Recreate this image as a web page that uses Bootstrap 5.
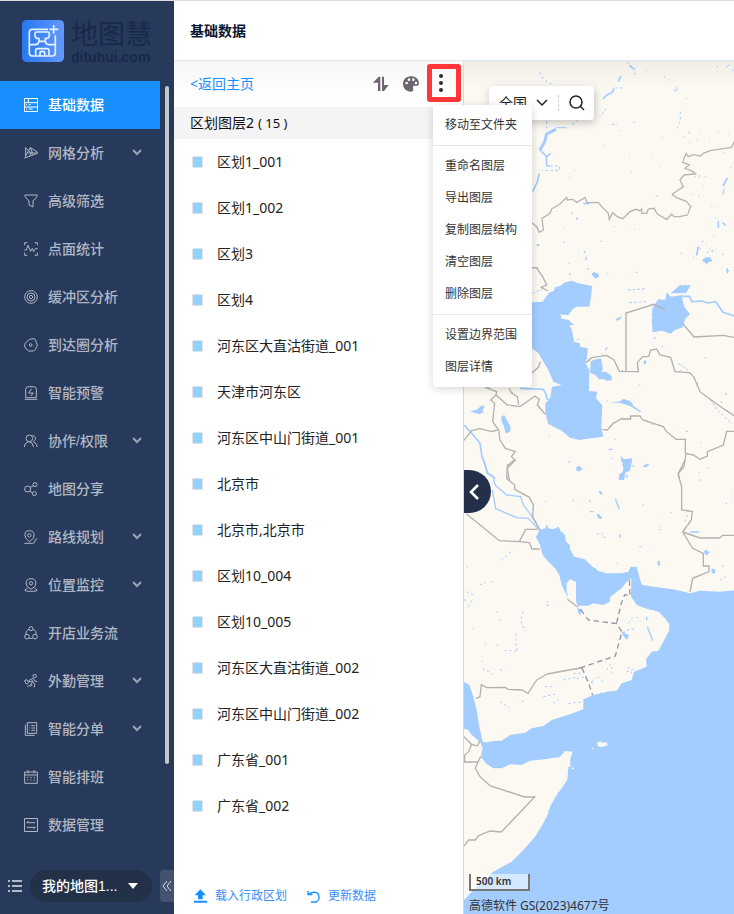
<!DOCTYPE html>
<html lang="zh-CN">
<head>
<meta charset="utf-8">
<meta name="viewport" content="width=device-width, initial-scale=1">
<title>基础数据</title>
<link href="https://cdn.jsdelivr.net/npm/bootstrap@5.3.0/dist/css/bootstrap.min.css" rel="stylesheet">
<style>
  body{font-family:"Noto Sans","Noto Sans CJK SC",sans-serif;font-size:14px;line-height:20px;color:#222}
  .app-shell{border-top:1px solid #dedede}
  .side-pane{width:174px;background:#283a5b;color:#b1b7c2;font-family:"Liberation Sans","Noto Sans CJK SC",sans-serif}
  .brand{height:80px;padding:19px 0 0 22px;gap:7px;color:#17284b;text-decoration:none}
  .brand-cn{font-size:27px;line-height:30px}
  .brand-en{font-size:14px;line-height:14px;font-weight:700}
  .side-menu{width:160px}
  .side-menu .nav-link{height:48px;padding:0 18px 0 24px;gap:10px;color:inherit;font-weight:500;border-radius:0}
  .side-menu .nav-link.active{background:#188fff;color:#fff}
  .ico{width:14px;height:14px;flex:none;fill:none;stroke:currentColor;stroke-width:3}
  .chev{width:10px;height:8px;flex:none;fill:none;stroke:#98a3b5;stroke-width:2}
  .side-thumb{right:5px;top:85px;width:4px;height:678px;background:#c5c7cb;border-radius:2px}
  .side-foot{height:32px;margin-bottom:12px}
  .plain-btn{padding:0;border:0;background:none;color:inherit;line-height:0}
  .map-pick{width:122px;height:32px;padding:0 14px 0 12px;border:0;border-radius:16px;background:#223048;color:#fff;font-weight:500}
  .fold-btn{width:14px;height:32px;padding:0;border:0;border-radius:4px 0 0 4px;background:#43526f;color:#dce0e7;line-height:0}
  .page-head{height:60px;padding:0 16px;border-bottom:1px solid #dde8f3}
  .page-head h1{font-size:14px;line-height:20px;font-weight:700;color:#0a1530}
  .layer-pane{width:290px;border-right:1px solid #d8dadd;background:linear-gradient(#f7f7f8,#fff 40px)}
  .tool-row{height:46px;padding:0 2px 0 16px;gap:14px;color:#6d6671}
  .tool-row>a{color:#188fff;text-decoration:none}
  .more-wrap{margin-left:-6px}
  .more-btn{width:34px;height:38px;margin-top:-3px;padding:0 0 0 7px;border:5px solid #ff3738;border-radius:3px;background:transparent;line-height:0}
  .group-row{height:32px;padding:0 16px;background:#f4f4f4;color:#111}
  .group-row small{font-size:13px}
  .layer-row{height:46px;padding:0 18px;gap:14px}
  .swatch{width:11px;height:12px;border:1px solid #e4e3e3;border-radius:1px;background:#91d3ff}
  .pane-foot{padding:0 20px;margin-bottom:8px;gap:20px;font-size:12px}
  .pane-foot button{color:#3b8ff5;line-height:20px}
  .more-wrap .dropdown-menu{left:6px;top:38px;min-width:0;width:99px;padding:4px 0;margin:0;border:0;border-radius:4px;font-size:12px;box-shadow:0 2px 8px #0000002b;z-index:30}
  .dropdown-menu .dropdown-item{height:32px;padding:0 12px;line-height:32px;color:#333}
  .dropdown-menu .dropdown-divider{margin:4px 0;border-color:#e6e6e6;opacity:1}
  .map-pane{background:#fcf9f2}
  .map-pane .top-shade{height:28px;background:linear-gradient(#0000000c,#0000);inset:0 0 auto}
  .map-find{left:25px;top:25px;height:34px;padding:0 9px 0 10px;gap:10px;background:#fff;border-radius:3px;box-shadow:1px 3px 8px #00000038}
  .map-find select{appearance:none;border:0;padding:0;background:none;width:28px;color:#222;line-height:20px}
  .find-chev{margin-left:-1px}
  .find-rule{height:16px;border-left:1px dashed #ccc}
  .pane-toggle{left:0;top:409px;width:27px;height:43px;border:0;padding:0 0 0 4px;border-radius:0 22px 22px 0;background:#24304a;line-height:0}
  .map-notes{left:5px;bottom:0;color:#333;font-size:12px}
  .scale-bar{width:61px;height:17px;padding-left:5px;border:2px solid #777;border-top:0;background:#ffffff88;font-size:10px;line-height:14px;font-weight:600}
  .map-notes p{margin:6px 0 0;line-height:17px}
</style>
<script src="https://cdn.jsdelivr.net/npm/bootstrap@5.3.0/dist/js/bootstrap.bundle.min.js"></script>
</head>
<body>
<svg class="d-none"><symbol id="down" viewBox="0 0 10 8"><path d="M1 1l4 4 4-4"/></symbol></svg>
<div class="app-shell d-flex vh-100 overflow-hidden">
  <aside class="side-pane position-relative d-flex flex-column flex-shrink-0">
    <a class="brand d-flex" href="#">
      <svg width="42" height="42" viewBox="0 0 126 126"><defs><linearGradient id="lg" x2="1"><stop stop-color="#2778f3"/><stop offset="1" stop-color="#6299f9"/></linearGradient></defs><rect width="126" height="126" rx="14" fill="url(#lg)"/><g fill="none" stroke="#e8f2ff" stroke-width="5"><path d="M78 28H31q-9 0-9 9v62q0 9 9 9h60q9 0 9-9V46"/><path d="M22 74h18q9 0 11-10V56q-12 0-12-10v-6q0-4 4-4h35q4 0 4 4v6q0 10-12 10v8q2 10 11 10h19M49 64h22M41 106V92q0-6 6-6h28q6 0 6 6v14M54 108V98q0-4 7-4t7 4v10"/><path d="M95 15v26M82 28h27"/></g></svg>
      <span class="d-flex flex-column"><span class="brand-cn">地图慧</span><span class="brand-en">dituhui.com</span></span>
    </a>
    <nav class="side-menu nav flex-column">
      <a class="nav-link active d-flex align-items-center" href="#"><svg class="ico" viewBox="0 0 42 42"><path d="M1.500 1.500h39v39h-39zM1.500 14h39M1.500 27h39M13 1v13M6 20h3M14 20h6M6 33h3M14 33h12"/></svg>基础数据</a>
      <a class="nav-link d-flex align-items-center" href="#"><svg class="ico" viewBox="0 0 42 42"><path d="M5 4v31l-4 2M5 35L40 22v-4L19 5 5 29M5 6l23 20M12 21h28M19 5l6 14-8 10"/></svg>网格分析<svg class="chev ms-auto"><use href="#down"/></svg></a>
      <a class="nav-link d-flex align-items-center" href="#"><svg class="ico" viewBox="0 0 42 42"><path d="M3 3h36v5L27 21v18l-12-6V21L3 8z"/></svg>高级筛选</a>
      <a class="nav-link d-flex align-items-center" href="#"><svg class="ico" viewBox="0 0 42 42"><path d="M10 2H2v8M32 2h8v8M10 40H2v-8M32 40h8v-8M1 24h6l5-14 8 18 5-9 4 10 5-9h7"/></svg>点面统计</a>
      <a class="nav-link d-flex align-items-center" href="#"><svg class="ico" viewBox="0 0 42 42"><circle cx="21" cy="21" r="19"/><circle cx="21" cy="21" r="12"/><circle cx="21" cy="21" r="5"/></svg>缓冲区分析</a>
      <a class="nav-link d-flex align-items-center" href="#"><svg class="ico" viewBox="0 0 42 42"><path d="M16 4l14-2q3 0 4 4l6 14q0 4-7 15l-4 4H14L3 29q-2-4 0-13z"/><circle cx="20" cy="21" r="4"/></svg>到达圈分析</a>
      <a class="nav-link d-flex align-items-center" href="#"><svg class="ico" viewBox="0 0 42 42"><path d="M5 35V10q0-8 9-8h14q9 0 9 8v25zM2 40h38M23 8l-9 13h14l-8 9"/></svg>智能预警</a>
      <a class="nav-link d-flex align-items-center" href="#"><svg class="ico" viewBox="0 0 42 42"><circle cx="16" cy="13" r="10"/><path d="M1 39l3-10 10-6 9 3 6 13M25 4q11 2 9 12l-6 7 8 6 4 10"/></svg>协作/权限<svg class="chev ms-auto"><use href="#down"/></svg></a>
      <a class="nav-link d-flex align-items-center" href="#"><svg class="ico" viewBox="0 0 42 42"><circle cx="11" cy="21" r="9"/><circle cx="33" cy="8" r="6"/><circle cx="31" cy="35" r="6"/><path d="M19 16l9-5M17 27l8 6"/></svg>地图分享</a>
      <a class="nav-link d-flex align-items-center" href="#"><svg class="ico" viewBox="0 0 42 42"><path d="M16 35L5 24q-8-22 11-22t13 22zM1 40h25q8-1 6-6-1-4 8-8"/><circle cx="16" cy="16" r="5"/></svg>路线规划<svg class="chev ms-auto"><use href="#down"/></svg></a>
      <a class="nav-link d-flex align-items-center" href="#"><svg class="ico" viewBox="0 0 42 42"><path d="M21 34L9 25Q0 2 21 2t12 23zM10 31q-20 9 11 9t11-9"/><circle cx="21" cy="16" r="5"/></svg>位置监控<svg class="chev ms-auto"><use href="#down"/></svg></a>
      <a class="nav-link d-flex align-items-center" href="#"><svg class="ico" viewBox="0 0 42 42"><circle cx="21" cy="8" r="6"/><circle cx="9" cy="32" r="7"/><circle cx="33" cy="32" r="7"/><path d="M15 9Q5 14 5 25M27 9q10 5 10 16M16 37h10"/></svg>开店业务流</a>
      <a class="nav-link d-flex align-items-center" href="#"><svg class="ico" viewBox="0 0 42 42"><circle cx="32" cy="6" r="5"/><path d="M27 13L14 20l4 4 8-4-4 12-12 6M27 13l6 8 7 2M28 23l4 8-1 9M1 20l8-3 5 9-6 5zM20 37l5-4"/></svg>外勤管理<svg class="chev ms-auto"><use href="#down"/></svg></a>
      <a class="nav-link d-flex align-items-center" href="#"><svg class="ico" viewBox="0 0 42 42"><path d="M10 2h28v32H10zM4 8v32h28M16 11h2M22 11h11M16 18h2M22 18h11M16 25h2M22 25h11"/></svg>智能分单<svg class="chev ms-auto"><use href="#down"/></svg></a>
      <a class="nav-link d-flex align-items-center" href="#"><svg class="ico" viewBox="0 0 42 42"><path d="M2 6h38v34H2zM2 15h38M12 0v10M30 0v10M9 22h4M19 22h4M29 22h4M9 30h4M19 30h4M29 30h4"/></svg>智能排班</a>
      <a class="nav-link d-flex align-items-center" href="#"><svg class="ico" viewBox="0 0 42 42"><path d="M1.500 1.500h39v39h-39zM8 14h26M14 9l-6 5M8 28h26l-6 5"/></svg>数据管理</a>
    </nav>
    <div class="side-thumb position-absolute"></div>
    <div class="side-foot mt-auto d-flex align-items-center justify-content-between">
      <button class="plain-btn ms-2" aria-label="列表"><svg width="14" height="14" viewBox="0 0 14 14" stroke="#e0e4eb" stroke-width="1.300"><path d="M0 2h2M4 2h10M0 7h2M4 7h10M0 12h2M4 12h10"/></svg></button>
      <button class="map-pick d-flex align-items-center justify-content-between">我的地图1...<svg width="10" height="6" viewBox="0 0 10 6" fill="#fff"><path d="M0 0h10L5 6z"/></svg></button>
      <button class="fold-btn" aria-label="收起"><svg width="10" height="12" viewBox="0 0 10 12" fill="none" stroke="currentColor"><path d="M5 1L1 6l4 5M9 1L5 6l4 5"/></svg></button>
    </div>
  </aside>

  <div class="d-flex flex-column flex-grow-1 bg-white">
    <header class="page-head d-flex align-items-center"><h1 class="m-0">基础数据</h1></header>
    <main class="d-flex flex-grow-1">
      <section class="layer-pane d-flex flex-column flex-shrink-0">
        <div class="tool-row d-flex align-items-center">
          <a class="me-auto" href="#">&lt;返回主页</a>
          <button class="plain-btn" aria-label="排序"><svg width="16" height="16" viewBox="0 0 48 48" fill="currentColor"><path d="M0 20L17 2h5v43h-7V20zM27 2h6v25h14L33 45h-6z"/></svg></button>
          <button class="plain-btn" aria-label="配色"><svg width="16" height="16" viewBox="0 0 48 48"><path fill="currentColor" d="M24 1C9 1 0 12 0 23c0 13 10 24 24 24 7 0 8-5 6-10-1-6 1-8 6-8h6c4 0 6-3 6-8C47 9 37 1 24 1z"/><g fill="#fafafa"><circle cx="11" cy="21" r="4"/><circle cx="18" cy="11" r="4"/><circle cx="31" cy="11" r="4"/><circle cx="39" cy="21" r="4"/></g></svg></button>
          <div class="more-wrap position-relative">
            <button class="more-btn text-start" aria-label="更多" aria-expanded="true"><svg width="4" height="18" viewBox="0 0 4 18" fill="#302b32"><circle cx="2" cy="2" r="2"/><circle cx="2" cy="9" r="2"/><circle cx="2" cy="16" r="2"/></svg></button>
            <ul class="dropdown-menu show">
              <li><a class="dropdown-item" href="#">移动至文件夹</a></li>
              <li><hr class="dropdown-divider"></li>
              <li><a class="dropdown-item" href="#">重命名图层</a></li>
              <li><a class="dropdown-item" href="#">导出图层</a></li>
              <li><a class="dropdown-item" href="#">复制图层结构</a></li>
              <li><a class="dropdown-item" href="#">清空图层</a></li>
              <li><a class="dropdown-item" href="#">删除图层</a></li>
              <li><hr class="dropdown-divider"></li>
              <li><a class="dropdown-item" href="#">设置边界范围</a></li>
              <li><a class="dropdown-item" href="#">图层详情</a></li>
            </ul>
          </div>
        </div>
        <div class="group-row d-flex align-items-center gap-1">区划图层2 <small>( 15 )</small></div>
        <ul class="list-unstyled m-0">
          <li class="layer-row d-flex align-items-center"><span class="swatch"></span>区划1_001</li>
          <li class="layer-row d-flex align-items-center"><span class="swatch"></span>区划1_002</li>
          <li class="layer-row d-flex align-items-center"><span class="swatch"></span>区划3</li>
          <li class="layer-row d-flex align-items-center"><span class="swatch"></span>区划4</li>
          <li class="layer-row d-flex align-items-center"><span class="swatch"></span>河东区大直沽街道_001</li>
          <li class="layer-row d-flex align-items-center"><span class="swatch"></span>天津市河东区</li>
          <li class="layer-row d-flex align-items-center"><span class="swatch"></span>河东区中山门街道_001</li>
          <li class="layer-row d-flex align-items-center"><span class="swatch"></span>北京市</li>
          <li class="layer-row d-flex align-items-center"><span class="swatch"></span>北京市,北京市</li>
          <li class="layer-row d-flex align-items-center"><span class="swatch"></span>区划10_004</li>
          <li class="layer-row d-flex align-items-center"><span class="swatch"></span>区划10_005</li>
          <li class="layer-row d-flex align-items-center"><span class="swatch"></span>河东区大直沽街道_002</li>
          <li class="layer-row d-flex align-items-center"><span class="swatch"></span>河东区中山门街道_002</li>
          <li class="layer-row d-flex align-items-center"><span class="swatch"></span>广东省_001</li>
          <li class="layer-row d-flex align-items-center"><span class="swatch"></span>广东省_002</li>
        </ul>
        <div class="pane-foot mt-auto d-flex">
          <button class="plain-btn d-flex align-items-center gap-2"><svg width="13" height="14" viewBox="0 0 39 42" fill="#188fff"><path d="M19 1l17 18H26v12H12V19H2zM0 35h39v6H0z"/></svg>载入行政区划</button>
          <button class="plain-btn d-flex align-items-center gap-2"><svg width="13" height="13" viewBox="0 0 39 39" fill="none" stroke="#188fff" stroke-width="4"><path d="M3 3v11h13M3 14Q18 4 29 8c11 7 9 22-1 28H12"/></svg>更新数据</button>
        </div>
      </section>

      <section class="map-pane position-relative flex-grow-1 overflow-hidden">
        <svg class="position-absolute top-0 start-0 w-100 h-100" viewBox="464 61 270 853" preserveAspectRatio="xMinYMin slice">
          <defs><filter id="rough" filterUnits="userSpaceOnUse" x="-300" y="-20" width="1300" height="1450"><feTurbulence type="fractalNoise" baseFrequency=".2" numOctaves="2" seed="4"/><feDisplacementMap in="SourceGraphic" scale="5" xChannelSelector="R" yChannelSelector="G"/></filter></defs>
          <!-- northern steppe: rivers and borders -->
          <g transform="translate(530 60) scale(.33333)" fill="none" stroke="#a3cdff" stroke-width="3">
            <path d="M78 203h32"/><path stroke-width="9" d="M78 208L50 222L44 245L30 270"/><path stroke-width="5" d="M30 270L50 290L62 280M49 290L50 317L60 318M28 340L22 365L8 395M219 117L230 105L246 98L252 85M265 65L272 48"/>
            <path stroke-dasharray="8 7" d="M28 37l14 22 28 17M290 5l10 12 12 5 4 22M430 90l12 1M451 155v25l-12 28M126 193l17-12M245 193l18 2M310 190l6-6M378 405l8 10M0 592l15 5M50 183v22M60 318H88V331H36M228 145l-18 27M255 84h22"/>
            <path stroke-width="5" d="M298 16l12 10M592 354l-13 24M565 484v20M138 476h6M160 430h18M578 488l8 8M505 560l-5 25M525 594h18"/>
            <path d="M348 33h3M417 60h3M441 81v12M560 20h4M588 22l10-8M608 28v5M467 115h3M402 51h3M478 214v7M509 213h3M460 230h3M478 247h3M500 240h3M537 235h3M562 215h3M596 222h3M222 256h3M297 283h3M303 337h3M132 331h3M119 351h3M367 285h3M390 319h3M396 232h3M578 275l4 5M602 323h3M578 405l5-20M524 350h3M508 345v7M517 378h3M494 350h3M487 403h3M484 440h3M505 408h3M544 439h3M563 440h3M556 475h3M123 456l4 6M99 506h3M144 571h3M164 572v8M20 557h9M214 544h3M251 500h3M312 508h3M514 548l6-6M528 550h3M551 527h3M510 565h3M538 567h3M546 574h3M576 583h5M489 592h3M266 212h3"/>
            <path filter="url(#rough)" stroke="#b7b5b3" stroke-width="4" d="M-10 478L6 488L20 500L28 517L40 510L36 475L60 460L65 447L90 432L110 412L112 420L128 418L140 427L165 413L172 428L205 427L215 440L235 460L238 478L248 458L262 470L278 476L300 455L318 448L330 452L335 447L335 460L350 460L355 447L372 445L382 462L410 478L425 462L432 470L450 470L472 465L482 440L470 425L440 413L427 403L445 390L460 380L450 360L462 345L497 342L490 335L465 325L478 315L458 307L468 280L475 290L490 284L512 288L520 280L540 272L605 262L612 245"/>
          </g>
          <!-- Caspian and Aral -->
          <g transform="translate(420 240) scale(.33333)" fill="#a3cdff">
            <g filter="url(#rough)">
            <path d="M300 188L336 187L368 185L385 160L402 152L405 142L420 138L432 128L455 122L475 130L490 133L516 138L513 172L508 200L470 200L458 208L445 226L422 222L424 236L446 240L462 255L448 256L456 270L462 305L480 310L480 320L503 325L502 345L497 370L508 390L507 453L532 455L528 475L547 496L544 560L550 590L500 596L480 600L450 593L425 572L385 552L376 520V490L390 476L396 440L425 436L400 425L385 390L355 340L336 325L300 310z"/>
            <path d="M512 364l20-8 12 1 5 30-5 8 16 2 14 10 2 14-14 1-12-4-14-1-10-12-16-7zM740 157L752 170L787 165L787 180L795 205L810 222L795 238L788 262L765 270L752 281L725 272L698 277L695 240L697 205L715 178L736 180zM752 160L780 135L812 136L798 160zM515 100l8-4 12 6 2 8-10 6-9-8zM848 58l12-6 18 8-4 5-10 1-2 10-6-8-8-4zM244 528l10-2 5 12 13 22-2 16-14 4-4-20-7-15zM150 514l20-5 16-13 8 4-8 14 8 2-16 6-12-2zM602 648L612 658L638 655L634 672L630 692L612 698V720H598V706L614 690L620 672L604 665zM568 490L600 484L610 476L632 484L640 498L664 514L660 517L630 498L600 488zM468 683l10-5 9 8-8 8-8-1zM672 679l10-8 4 4-9 8zM588 236l18-7-4 7-12 7zM672 360l8 4-4 10-6-4z"/>
            </g>
            <g fill="none" stroke="#a3cdff" stroke-width="5"><path d="M787 169h22l6 16 30-2 18 6 24-4 22 32 33 11M300 445l70 3 8 14 3 15 10 2M133 555L155 580L180 610L186 650L196 675L202 700L226 715"/><path stroke-width="3" stroke-dasharray="8 6" d="M624 150l55-4M628 188l55-3M830 47l4-20M860 38l30-10M776 370l28 20M870 478l20 30 46 44M337 160l30-13M350 14h12"/><path stroke-width="4" d="M498 50v10M500 86h6M449 100v6M430 7h4M446 70h3M542 4h4M562 102h3M648 97h4M782 40h4M918 92h10M922 85v15M556 330l6-9M472 298h5M566 628h12M446 666h5M640 674v6M704 292v5M854 353h5M842 608h3M798 574h5M386 590h3M520 592h3M836 698h3M725 320h4M918 458v6M902 486h4M658 434h3M560 483h3M862 685h3M500 425h4M584 598h3M575 655h3M340 202h10"/></g>
            <g fill="none" stroke="#b3b1b1" stroke-width="4"><path d="M618 393V219L702 193L736 210M788 250L822 291L910 286L942 292"/><path filter="url(#rough)" d="M330 82L350 84L368 110L380 135L364 142L384 153M498 368L515 353L560 346L582 360L598 394L655 395L652 368L668 350L686 350L692 330L710 327L720 345L752 352L765 395L808 398L820 408L840 455L890 492L942 527M548 569L562 570L580 550L604 537H632V528H660L668 540L730 560L740 575L768 598H796V640L820 645L840 658L862 648V635L910 615L920 574H942M798 642L792 680L775 700L778 715M195 442L230 455L228 465L212 480L224 490L218 545L236 570L240 600L256 625L286 635L274 650L286 660L262 685L268 720M131 602L155 572L180 566L215 575L232 570M228 465L262 495L300 500L345 468L358 478L352 495L375 522M268 445L275 460L292 470L296 495M361 365L355 382L335 400"/></g>
          </g>
          <!-- Gulf, Arabian Sea and Horn of Africa -->
          <g transform="translate(460 460) scale(.33333)" fill="#a3cdff">
            <g filter="url(#rough)">
            <path d="M238 210L256 205L260 192L265 205L280 208L296 200L302 214L315 225L318 245L330 255V268L343 290L375 298L395 318L415 333L440 340H485L505 335L512 320H530L538 350L545 374L580 380L640 388L690 400L720 392L780 395L850 388V1400H-10V1345L40 1290L100 1235L155 1205L190 1170L225 1130L250 1090L265 1060L270 1040L290 1005L305 985L322 960L325 920H332L330 900L338 875L315 873L300 890L260 897L210 902L185 915L150 913L125 925H100L80 912L62 890L68 865L60 845L35 825L25 810L-10 800V665H12L28 675L40 710L50 750L58 800L68 845L80 847L100 843L125 842L150 825L195 818L215 805L250 798L275 780L330 763L370 748V718L400 705L440 695L470 692L485 670L515 660L522 635L560 620L558 598L575 575L595 572L610 545L628 510V492L610 470L595 455L555 445L530 435L513 410L514 355L500 365L485 385L465 400L450 412V425L430 435L400 430L385 437H352L348 420V365L330 358L320 370V400L325 418L305 375L298 345L285 325L265 305L248 285L240 255L228 232z"/>
            <path fill="#fcf9f2" d="M410 850l10-6 10 4 8-2 6 8-14 6-14 0zM335 923h7v5h-7zM396 863h4v4h-4z"/>
            <path d="M348 24l8-6 12 8-10 8zM478 42l10-4 2-16-4-8 6-14h16l2 14-10 8-4 18-4 20-16-2zM410 162l8 1 8 10-4 5-8-5zM415 92l8 1 6 12-8-2zM386 120l8 4-4 4zM484 516l10-2 2 8 12 2-4 8-2 8-10-10zM732 274l8-6 2 6 8 2-10 10-6-4zM755 325l12 5-4 12-8-3zM592 305l6-4 3 14-6 3zM352 445l14 2-6 20-6-10z"/>
            </g>
            <g fill="none" stroke="#a3cdff" stroke-width="4"><path d="M70 0L82 38L100 50L105 75L140 105L182 110L190 135L208 158L240 210M97 90L107 146L170 173L205 175L235 208M466 116l12 32M562 500l16 42M560 470v10M690 216h28"/><path stroke-dasharray="7 8" stroke-width="3" d="M124 300l36-30M60 375l18-8M20 395l20 10M24 440l12-20M190 455l-8 28 12 30M168 520v40l6 14-40-3M530 470l12 14M505 490l15-20M500 510l26-3M516 640l-15-25M440 630l14-22M455 620v20M340 640h30M350 656l28-6M380 658l20 12M500 635l20-8M415 650l20 22M255 680h30M250 710l35-8M280 730l16-12M325 730l40-4M120 725l28 18M185 726l10-5M310 660l40-8M395 665l14-12M785 320l12-6M780 360l18-10M68 625l35 20M680 148l10 10M675 185l8-20M598 209h10M538 260h6M410 222l20 0M430 232h8"/><path d="M557 14h10M550 20l6-5M390 155h10M340 120v4M255 124h3M470 310h3M500 45v8M570 400h4M480 222v12M20 320h4M93 365h4M118 480h4M110 456h3M38 506h3M260 436h6M12 420h4M75 550h3M65 604h3M260 425h3M120 630h4M110 555h3M630 158h4M718 60h4M797 130h4M812 108h3M600 200h3M548 135h3"/></g>
            <g fill="none" stroke="#b3b1b1" stroke-width="4"><path filter="url(#rough)" d="M162 0L142 18L140 55L164 75V88L208 112L220 135L218 170L240 210M675 0L654 42L665 80V150L697 155L694 180L668 216M12 830L34 853L52 858L60 842M34 855L26 875L14 885V906"/><path d="M20 162L118 242L178 245L208 248L216 267H240M178 245L197 208H232M668 216L720 234H778L788 226H822M668 216L698 265L730 280V318H747V335L698 355L690 396M322 418L352 440M230 660L262 642L360 624M230 660L204 700L186 690L145 688L136 682L80 683L64 674L60 710L48 716M12 906H54L62 890M54 906L46 925L60 950L90 977L194 1011H224L124 1116L90 1113L56 1127L46 1140H26L12 1158"/><path stroke="#9693a5" stroke-dasharray="16 11" d="M360 624L466 588L486 515L470 491L385 480L355 440M470 488L484 430L494 404L510 408L508 355M366 624L386 670L398 706"/></g>
          </g>
        </svg>
        <div class="top-shade position-absolute"></div>
        <form class="map-find position-absolute d-flex align-items-center">
          <select aria-label="地区"><option>全国</option></select>
          <svg class="find-chev" width="12" height="8" viewBox="0 0 12 8" fill="none" stroke="#222" stroke-width="1.500"><path d="M1 1l5 5 5-5"/></svg>
          <span class="find-rule"></span>
          <button type="button" class="plain-btn" aria-label="搜索"><svg width="16" height="16" viewBox="0 0 16 16" fill="none" stroke="#222" stroke-width="1.500"><circle cx="7" cy="7" r="6"/><path d="M11 11l4 4"/></svg></button>
        </form>
        <button class="pane-toggle position-absolute text-start" aria-label="收起面板"><svg width="12" height="18" viewBox="0 0 12 18" fill="none" stroke="#fff" stroke-width="2.500"><path d="M10 2L3 9l7 7"/></svg></button>
        <div class="map-notes position-absolute"><div class="scale-bar">500 km</div><p>高德软件 GS(2023)4677号</p></div>
      </section>
    </main>
  </div>
</div>
</body>
</html>
